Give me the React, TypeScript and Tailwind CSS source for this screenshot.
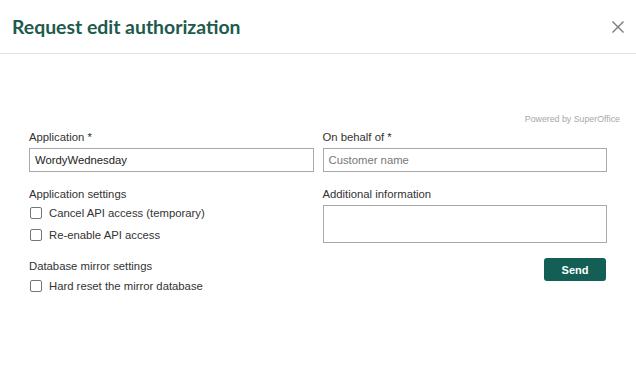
import React from "react";

function Checkbox({ label }: { label: string }) {
  return (
    <label className="flex h-[22px] items-center">
      <span className="ml-[1px] h-[12px] w-[12px] rounded-[2px] border border-[#767676] bg-white" />
      <span className="ml-[7px]">{label}</span>
    </label>
  );
}

export default function App() {
  return (
    <div className="h-[369px] w-[636px] bg-white text-[11.3px] leading-[14px] text-[#333]" style={{ fontFamily: '"Liberation Sans", Arial, sans-serif' }}>
      <div className="flex h-[54px] items-center justify-between border-b border-[#e3e3e3] pl-[12px] pr-[11px]">
        <h1 className="text-[19.4px] font-bold text-[#215a4d]" style={{ fontFamily: 'Lato, sans-serif' }}>
          Request edit authorization
        </h1>
        <svg width="14" height="14" viewBox="0 0 14 14" className="mt-[1px]">
          <path d="M1.5 1.5 L12.5 12.5 M12.5 1.5 L1.5 12.5" stroke="#7a7a7a" strokeWidth="1.4" fill="none" />
        </svg>
      </div>
      <div className="pt-[59px]">
        <div className="pr-[16px] text-right text-[8.8px] leading-[12px] text-[#a8a8a8]">Powered by SuperOffice</div>
        <div className="mt-[5px] grid grid-cols-2 gap-x-[9px] px-[29px]">
          <div className="flex flex-col">
            <div>Application *</div>
            <div className="mt-[4px] flex h-[24px] items-center border border-[#a9a9a9] px-[5px] text-[#222]">WordyWednesday</div>
            <div className="mt-[15px]">Application settings</div>
            <div className="mt-[1px]">
              <Checkbox label="Cancel API access (temporary)" />
              <Checkbox label="Re-enable API access" />
            </div>
            <div className="mt-[13px]">Database mirror settings</div>
            <div className="mt-[2px]">
              <Checkbox label="Hard reset the mirror database" />
            </div>
          </div>
          <div className="flex flex-col">
            <div>On behalf of *</div>
            <div className="mt-[4px] flex h-[24px] items-center border border-[#a9a9a9] px-[5px] text-[#777]">Customer name</div>
            <div className="mt-[15px]">Additional information</div>
            <div className="mt-[4px] h-[38px] border border-[#a9a9a9]" />
            <div className="mt-[15px] flex justify-end pr-[1px]">
              <button className="h-[23px] w-[62px] rounded-[3px] bg-[#135f56] text-[11px] font-bold text-white">Send</button>
            </div>
          </div>
        </div>
      </div>
    </div>
  );
}
